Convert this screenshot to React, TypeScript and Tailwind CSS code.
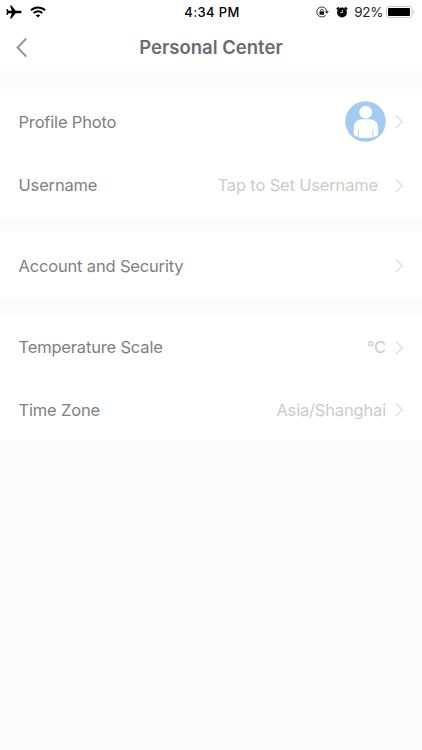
import { clsx } from 'clsx';
import type { ReactNode } from 'react';

function AirplaneIcon() {
  return (
    <svg width="16" height="14" viewBox="0 0 16 14" fill="#000">
      <path d="M15.6 7c0-.8-.8-1.3-1.8-1.3H9.600L5.500.4H4l1.800 5.300H2.600L1.400 4.100H.3L.9 7l-.6 2.900h1.100l1.200-1.600h3.200L4 13.600h1.500l4.100-5.300h4.200c1 0 1.800-.5 1.800-1.300z" />
    </svg>
  );
}

function WifiIcon() {
  return (
    <svg width="16" height="12" viewBox="0 0 16 12" fill="none" stroke="#000" strokeWidth="2">
      <path d="M1 4.300C4.900.4 11.100.4 15 4.300" />
      <path d="M3.600 7.100c2.500-2.400 6.300-2.400 8.800 0" />
      <path d="M5.700 9.300c1.300-1.200 3.300-1.200 4.600 0L8 11.600z" fill="#000" stroke="none" />
    </svg>
  );
}

function RotationLockIcon() {
  return (
    <svg width="13" height="12" viewBox="0 0 13 12" fill="none" stroke="#222" strokeWidth="0.9">
      <path d="M10.800 5.400A5 5 0 1 0 9.800 9" />
      <path d="M8.900 5.300h3.900L10.900 7.700z" fill="#222" stroke="none" />
      <rect x="3.500" y="5.400" width="4.600" height="3.300" fill="#111" stroke="none" />
      <path d="M4.500 5.600v-1a1.300 1.300 0 0 1 2.600 0v1" />
    </svg>
  );
}

function AlarmIcon() {
  return (
    <svg width="12" height="12" viewBox="0 0 12 12" fill="#000">
      <circle cx="6" cy="6.500" r="4.900" />
      <path d="M.8 3.300 3 1.300M11.200 3.300 9 1.300" stroke="#000" strokeWidth="1.700" />
      <path d="M6.300 4v2.700H4.200" fill="none" stroke="#fff" strokeWidth="0.900" />
    </svg>
  );
}

function BatteryIcon() {
  return (
    <svg width="30" height="12" viewBox="0 0 30 12">
      <rect x=".5" y=".5" width="25.500" height="11" rx="2.500" fill="#fff" stroke="#c9c9c9" />
      <rect x="2" y="2" width="22" height="8" rx="1" fill="#000" />
      <path d="M27.300 4v4c1.600-.6 1.600-3.400 0-4z" fill="#c4c4c4" />
    </svg>
  );
}

function Avatar() {
  return (
    <svg width="41" height="41" viewBox="0 0 41 41" className="shrink-0">
      <circle cx="20.500" cy="20.500" r="20.300" fill="#a3cbf2" />
      <circle cx="20.700" cy="11.200" r="6.400" fill="#fff" />
      <path
        d="M8.800 33.500V27c0-5.400 3.600-8.700 8.700-8.700h6.700c5.200 0 8.900 3.300 8.900 8.700v6.500c-1.200 1.300-2.800 2.200-4.600 2.500l-3 .9h-9.600l-2.900-.9c-1.700-.4-3.100-1.300-4.200-2.500z"
        fill="#fff"
      />
      <path d="M13.300 28.500v7.500M28 28.500v7.500" stroke="#b4cbe0" strokeWidth="0.900" />
    </svg>
  );
}

function Chevron() {
  return (
    <svg width="9" height="16" viewBox="0 0 9 16" fill="none" className="shrink-0">
      <path d="M.8 1.600 7.500 7.800.8 14" stroke="#dedede" strokeWidth="1.300" />
    </svg>
  );
}

interface RowProps {
  label: string;
  value?: ReactNode;
  className?: string;
  labelClassName?: string;
  valueClassName?: string;
}

function Row({ label, value, className, labelClassName, valueClassName }: RowProps) {
  return (
    <button className={clsx('flex w-full items-center pr-[18px] pl-[18.500px] text-left', className)}>
      <span className={clsx('flex-1 text-[#808080]', labelClassName)}>{label}</span>
      <span className={clsx('text-[#cbcbcb]', valueClassName)}>{value}</span>
      <Chevron />
    </button>
  );
}

export default function App() {
  return (
    <div className="min-h-[750px] w-full bg-[#fcfcfc] font-['Inter','Liberation_Sans',sans-serif]">
      <header className="h-[73px] border-b-2 border-[#fafafa] bg-white">
        {/* Status bar */}
        <div className="grid h-6 grid-cols-[1fr_auto_1fr] items-center pr-[6px] pl-[6px] text-black">
          <div className="flex items-center gap-2">
            <AirplaneIcon />
            <WifiIcon />
          </div>
          <span className="pt-px pl-[2px] text-[13px] font-medium tracking-[0.35px]">4:34 PM</span>
          <div className="flex items-center justify-end">
            <RotationLockIcon />
            <span className="ml-[7px]">
              <AlarmIcon />
            </span>
            <span className="mr-[3px] ml-[6px] text-[13.500px] tracking-[-0.4px] text-[#222]">92%</span>
            <BatteryIcon />
          </div>
        </div>

        {/* Title bar */}
        <div className="grid h-[47px] grid-cols-[40px_1fr_40px] items-center">
          <button className="pl-4" aria-label="Back">
            <svg width="12" height="21" viewBox="0 0 12 21" fill="none">
              <path d="M10.300 1.300 1.500 10.500l8.800 9.200" stroke="#929292" strokeWidth="1.900" />
            </svg>
          </button>
          <h1 className="pt-px text-center text-[18.500px] font-semibold text-[#6c6c70]">Personal Center</h1>
        </div>
      </header>

      <main className="flex flex-col pt-4 text-[16.500px] tracking-[-0.17px]">
        <section className="mb-[14px] bg-white pb-px">
          <Row
            label="Profile Photo"
            value={<Avatar />}
            className="h-[65px]"
            labelClassName="pt-0.5"
            valueClassName="mr-[9px]"
          />
          <Row label="Username" value="Tap to Set Username" className="h-[63px]" valueClassName="mr-[17px]" />
        </section>

        <section className="mb-[18px] bg-white">
          <Row label="Account and Security" className="h-[66px] pt-[2px]" labelClassName="pt-px" />
        </section>

        <section className="bg-white">
          <Row label="Temperature Scale" value="°C" className="h-[63px]" valueClassName="mr-[9px]" />
          <Row label="Time Zone" value="Asia/Shanghai" className="h-[62px]" valueClassName="mr-[9px]" />
        </section>
      </main>
    </div>
  );
}
